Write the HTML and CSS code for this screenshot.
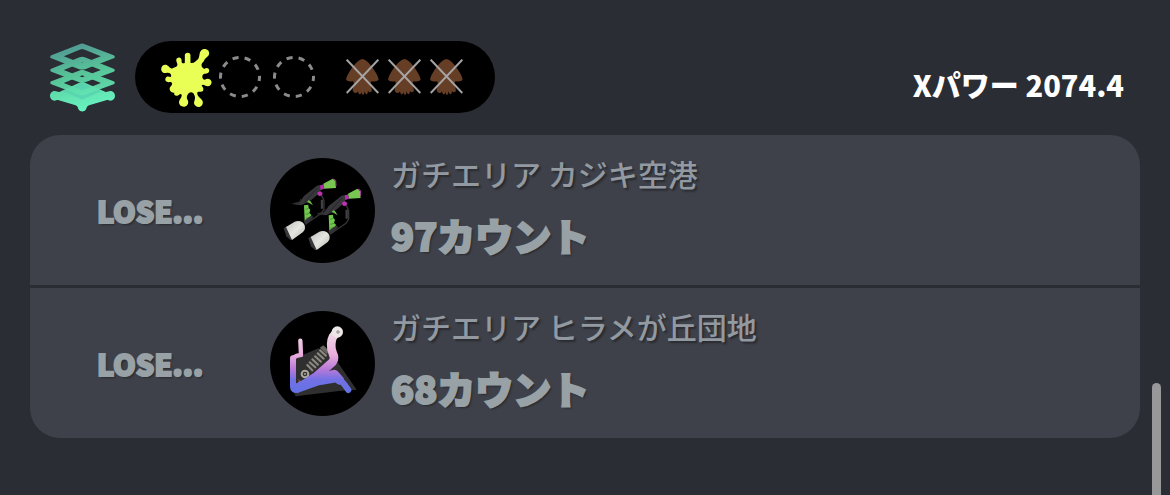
FILE: index.html
```
<!DOCTYPE html>
<html lang="ja">
<head>
  <meta charset="UTF-8">
  <meta name="viewport" content="width=device-width, initial-scale=1.0">
  <title>Xマッチ バトル履歴</title>
  <link rel="stylesheet" href="styles.css">
</head>
<body>
  <svg class="defs" aria-hidden="true">
    <symbol id="squid" viewBox="258 90 99 108">
      <path fill="#653e25" d="M307 90C298 92 290 99 282 109C271 123 262 136 258 151C260 157 269 159 279 157C283 163 283 169 279 177C276 184 279 190 285 192C289 193 292 191 294 187C295 194 297 197 300 196C303 195 304 191 304 188C305 194 307 198 310 197C313 196 313 191 314 187C315 193 318 197 321 195C324 193 323 189 324 186C327 191 332 191 335 187C337 182 334 177 332 171C330 165 331 161 335 157C345 159 354 157 356 151C352 136 343 123 332 109C325 99 317 92 307 90Z"/>
      <path stroke="#a5a3a3" stroke-width="6" d="M260 92L355 192M355 92L260 192"/>
    </symbol>
    <symbol id="empty" viewBox="0 0 42 42">
      <circle cx="21" cy="21" r="19.5" fill="none" stroke="#8b8b8b" stroke-width="3" stroke-dasharray="6.1 6.15" stroke-dashoffset="2"/>
    </symbol>
  </svg>

  <header class="match-header">
    <svg class="rule-icon" viewBox="59 36 198 207" role="img" aria-label="ガチエリア">
      <defs>
        <linearGradient id="mint" gradientUnits="userSpaceOnUse" x1="120" y1="36" x2="170" y2="243">
          <stop offset="0" stop-color="#559f9c"/>
          <stop offset="0.45" stop-color="#5bd0a0"/>
          <stop offset="1" stop-color="#68f4c1"/>
        </linearGradient>
      </defs>
      <path fill="url(#mint)" d="M73 181C80 181 84 185 89 183L145 157Q157 151 169 157L227 183C232 185 236 181 243 181C251 181 257 188 257 196C257 204 251 210 243 210C238 210 235 207 230 209L178 224C170 227 171 233 168 238C163 245 151 245 147 238C143 233 145 227 137 224L86 209C81 207 78 210 73 210C65 210 59 204 59 196C59 188 65 181 73 181Z"/>
      <path d="M100 181L157 157L215 181L157 207Z" fill="#54ceb0" opacity="0.65"/>
      <g fill="url(#mint)" fill-rule="evenodd" opacity="0.93">
        <path d="M149 118Q157 114 165 118L253 151Q260 156 253 160L166 192Q157 196 148 192L63 160Q56 156 63 151ZM157 133L101 156L157 178L214 156Z"/>
        <path d="M149 78Q157 74 165 78L253 113Q260 117 253 122L166 154Q157 158 148 154L63 122Q56 117 63 113ZM157 94L101 117L157 139L214 117Z"/>
        <path d="M149 38Q157 34 165 38L253 72Q260 77 253 81L166 114Q157 117 148 114L63 81Q56 77 63 72ZM151 54L101 75L149 94Q157 97 165 94L214 75L163 54Q157 52 151 54Z"/>
      </g>
    </svg>

    <div class="score-pill">
      <span class="slot">
        <svg class="splat" viewBox="392 49 153 178" role="img" aria-label="勝利">
          <g fill="#e9ff55" stroke="#e9ff55" stroke-linecap="round">
            <path stroke="none" d="M466 91C471 87 474 90 478 92C487 99 496 90 503 83C507 77 507 72 508 66C510 54 520 49 528 53C539 57 539 69 532 75C526 80 523 83 520 90C511 98 512 106 522 112C530 106 538 110 537 118C536 127 527 127 522 127C514 130 514 142 524 145C532 139 542 143 544 151C545 160 538 167 529 164C522 162 518 157 514 163C519 168 521 173 518 179C513 184 507 179 502 182C499 188 503 196 511 201C519 207 520 216 514 223C507 230 496 227 492 219C489 211 497 203 493 193C490 183 482 180 476 185C470 191 467 199 472 206C477 215 471 225 462 226C452 227 445 220 446 212C446 203 455 200 454 191C452 184 447 189 443 192C435 195 429 190 432 184C424 184 416 178 418 170C419 163 426 163 425 155C421 149 416 154 410 151C403 150 403 140 409 136C415 133 420 139 422 135C424 128 418 123 410 124C400 127 392 121 392 112C393 102 402 97 410 101C418 105 418 113 427 110C433 106 440 106 441 100C442 95 436 90 438 83C440 77 448 75 452 81C456 87 451 93 457 95C461 96 464 94 466 91Z"/>
            <path stroke-width="17" d="M472 72V98"/>
          </g>
        </svg>
      </span>
      <span class="slot"><svg class="empty"><use href="#empty"/></svg></span>
      <span class="slot"><svg class="empty"><use href="#empty"/></svg></span>
      <div class="losses">
        <svg class="squid"><use href="#squid"/></svg>
        <svg class="squid"><use href="#squid"/></svg>
        <svg class="squid"><use href="#squid"/></svg>
      </div>
    </div>

    <p class="power">Xパワー 2074.4</p>
  </header>

  <main class="battles">
    <article class="battle">
      <strong class="result">LOSE...</strong>
      <svg class="weapon" viewBox="30 24 315 315" role="img" aria-label="マニューバー">
        <defs>
          <linearGradient id="tank" x1="0" y1="0" x2="1" y2="1">
            <stop offset="0" stop-color="#bdbdba"/>
            <stop offset="0.5" stop-color="#e6e6e1"/>
            <stop offset="1" stop-color="#b3b3af"/>
          </linearGradient>
          <g id="dualie">
            <path d="M185 137L192 151V177L184 190L137 222" fill="none" stroke="#353438" stroke-width="4"/>
            <path d="M186 149V176" stroke="#414044" stroke-width="7"/>
            <path d="M97 160L120 155L132 138L171 107L184 104L184 118L175 132L153 151L126 165L111 165Z" fill="#37363a"/>
            <path d="M97 161L115 163L122 147M132 158L171 115" fill="none" stroke="#28272a" stroke-width="3"/>
            <path d="M180 107L190 103L193 116L182 120Z" fill="#b72ab0"/>
            <path d="M190 101L218 86L226 93L228 114L193 116Z" fill="#79c653"/>
            <path d="M220 87L227 91L228 108" fill="none" stroke="#ae3fa3" stroke-width="3"/>
            <path d="M173 127L181 124L188 129L185 137L177 138L172 133Z" fill="#bd32ae"/>
            <path d="M141 157L145 151L151 153L159 166L146 158Z" fill="#69bd48"/>
            <path d="M132 166L145 164L146 174L151 179L148 189L154 194L150 208L134 214Z" fill="#70c84b"/>
            <path d="M146 175L137 178M148 190L137 193M150 202L137 205" stroke="#4c9637" stroke-width="3"/>
            <path d="M131 213L155 196L160 202L137 225Z" fill="#343337"/>
            <path d="M71 235L81 228L101 265L92 271L79 259Z" fill="#39383a"/>
            <path d="M78 231L104 215Q117 210 127 217Q138 226 134 239Q130 247 121 252L96 270Z" fill="url(#tank)"/>
          </g>
        </defs>
        <circle cx="187.5" cy="181.5" r="157.5"/>
        <use href="#dualie"/>
        <use href="#dualie" x="74" y="30"/>
      </svg>
      <div class="detail">
        <p class="stage">ガチエリア カジキ空港</p>
        <p class="count">97カウント</p>
      </div>
    </article>

    <article class="battle">
      <strong class="result">LOSE...</strong>
      <svg class="weapon" viewBox="30 33 315 315" role="img" aria-label="ワイパー">
        <defs>
          <linearGradient id="frame" gradientUnits="userSpaceOnUse" x1="0" y1="95" x2="0" y2="270">
            <stop offset="0" stop-color="#f0dce7"/>
            <stop offset="0.4" stop-color="#e9acdc"/>
            <stop offset="0.65" stop-color="#b679d8"/>
            <stop offset="0.82" stop-color="#7471e4"/>
            <stop offset="1" stop-color="#6572e5"/>
          </linearGradient>
        </defs>
        <circle cx="187.5" cy="190.5" r="157.5"/>
        <path d="M107 174L175 145L214 165L233 187L290 269L236 273L107 289L98 269Z" fill="#302f2f"/>
        <path d="M134 194L187 142L207 158L155 219Z" fill="#373634"/>
        <path d="M142 195L157 211M149 187L166 202M157 178L174 194M165 169L183 185M173 160L191 176M180 151L198 167" stroke="#8b8a83" stroke-width="6" stroke-linecap="round"/>
        <path d="M179 143L190 136L208 153L200 162Z" fill="#66655f"/>
        <circle cx="135" cy="222" r="10" fill="#333" stroke="#aaa79b" stroke-width="6"/>
        <circle cx="135" cy="222" r="3" fill="#aaa79b"/>
        <path d="M116 237L125 245L115 250Z" fill="#925237"/>
        <g fill="none" stroke="url(#frame)" stroke-linejoin="round" stroke-linecap="round">
          <path stroke-width="13" d="M121 122L123 165Q111 164 99 174"/>
          <path stroke-width="18" d="M99 175V260Q99 272 113 269L172 248L234 237Q245 240 265 270"/>
          <path stroke-width="26" d="M112 265L168 230L218 186Q226 175 218 159C211 143 213 121 219 110L228 99"/>
          <path stroke-width="27" d="M113 263L184 231L223 223L239 241"/>
        </g>
        <circle cx="232" cy="96" r="17" fill="#eee7e8"/>
        <circle cx="234" cy="96" r="4" fill="#c7bbc0" stroke="#8d8086" stroke-width="2"/>
      </svg>
      <div class="detail">
        <p class="stage">ガチエリア ヒラメが丘団地</p>
        <p class="count">68カウント</p>
      </div>
    </article>
  </main>
  <div class="scroll-thumb"></div>
</body>
</html>
```

FILE: styles.css
```
* { box-sizing: border-box; }
body { margin: 0; padding: 41px 30px; background: #2b2d35; color: #fff; font-family: "Noto Sans CJK JP", sans-serif; }
p { margin: 0; }
svg { display: block; flex: none; }
.defs { position: absolute; width: 0; height: 0; }

.match-header { display: flex; align-items: center; gap: 20px; padding: 0 16px 0 20px; margin-bottom: 22px; }
.rule-icon { width: 65px; height: 69px; }
.score-pill { display: flex; align-items: center; height: 72px; padding: 0 27px 0 24px; border-radius: 36px; background: #000; }
.slot { display: flex; justify-content: center; width: 54px; }
.splat { width: 51px; height: 59px; }
.empty { width: 42px; height: 42px; }
.losses { display: flex; gap: 9px; padding: 0 5px; margin-left: 20px; }
.squid { width: 33px; height: 36px; }
.power { align-self: flex-end; margin-left: auto; font-size: 29px; font-weight: 900; line-height: 58px; white-space: nowrap; }

.battles { display: grid; gap: 3px; border-radius: 30px; overflow: hidden; }
.battle { display: grid; grid-template-columns: 240px 105px 1fr; align-items: center; min-height: 150px; background: #3e4149; color: #98a1a5; text-shadow: 2px 2px 2px rgba(0,0,0,0.35); }
.result { text-align: center; font-size: 29px; font-weight: 900; -webkit-text-stroke: 2px #98a1a5; }
.weapon { width: 105px; height: 105px; }
.detail { padding: 0 16px 12px; line-height: 62px; }
.stage { font-size: 30px; font-weight: 500; color: #9299a1; }
.count { font-size: 38px; font-weight: 900; -webkit-text-stroke: 2px #98a1a5; }

.scroll-thumb { position: fixed; right: 9px; bottom: 0; width: 9px; height: 112px; border-radius: 5px 5px 0 0; background: #98989b; }
```
